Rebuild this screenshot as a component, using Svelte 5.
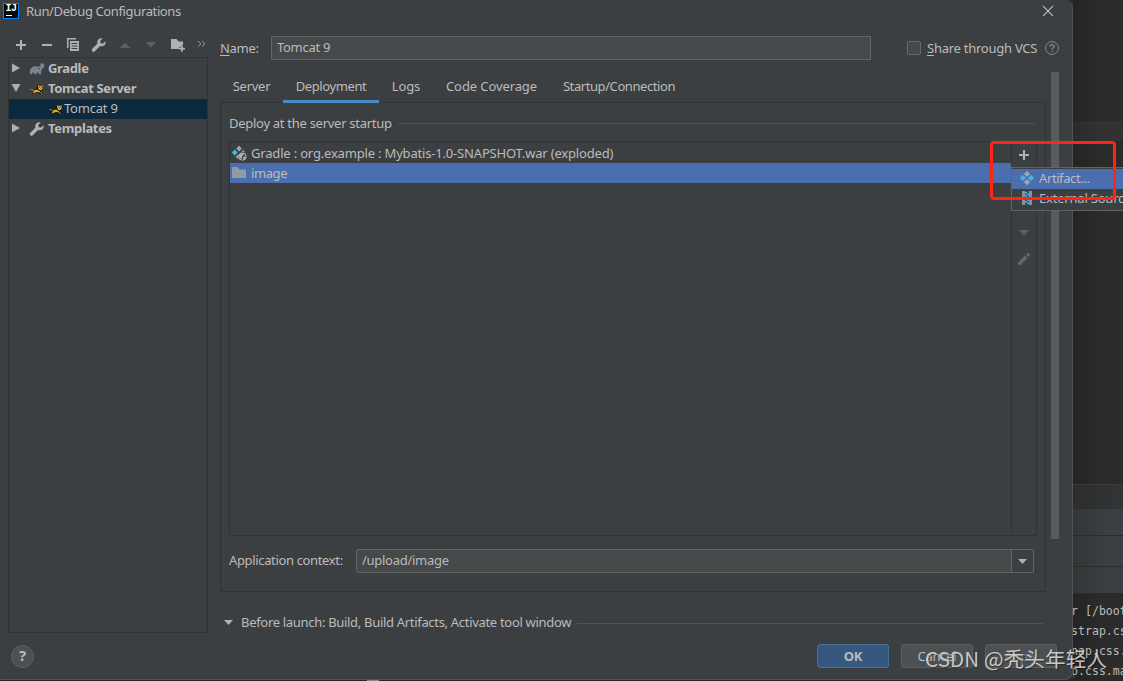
<script>
  let name = $state("Tomcat 9");
  let context = $state("/upload/image");
  let activeTab = $state("Deployment");
  let selected = $state(1);

  const tabs = [
    { label: "Server", cls: "server" },
    { label: "Deployment", cls: "deployment" },
    { label: "Logs", cls: "logs" },
    { label: "Code Coverage", cls: "coverage" },
    { label: "Startup/Connection", cls: "startup" },
  ];

  const tree = [
    { label: "Gradle", icon: "gradle", arrow: "right" },
    { label: "Tomcat Server", icon: "tomcat", arrow: "down" },
    { label: "Tomcat 9", icon: "tomcat", child: true },
    { label: "Templates", icon: "wrench", arrow: "right" },
  ];

  const deployments = [
    { label: "Gradle : org.example : Mybatis-1.0-SNAPSHOT.war (exploded)", icon: "exploded" },
    { label: "image", icon: "folder" },
  ];

  const consoleLines = ["r [/boot", "strap.cs", "nap.css.", "p.css.ma"];
</script>

{#snippet icon(kind)}
  <svg class="icon" width="16" height="16" viewBox="0 0 16 16">
    {#if kind === "add"}
      <path fill="#afb1b3" d="M7 3h2v4h4v2H9v4H7V9H3V7h4z" />
    {:else if kind === "remove"}
      <path fill="#afb1b3" d="M3 7h10v2H3z" />
    {:else if kind === "copy"}
      <path fill="#afb1b3" fill-rule="evenodd" d="M2 1h9v1.500H3.500V11H2zM5 4h9v10H5zM6.500 6v1h6V6zm0 2.500v1h6v-1zm0 2.500v1h6v-1z" />
    {:else if kind === "wrench"}
      <path fill="#afb1b3" d="M14.500 4.300 12 6.600l-2.300-.4-.5-2.300L11.600 1.400C9.800.9 7.900 1.500 6.900 3c-.7 1.100-.8 2.400-.4 3.500L1.300 11.800a1.700 1.700 0 0 0 0 2.400 1.700 1.700 0 0 0 2.500.1L9.100 9c1.500.6 3.300.3 4.500-.9 1-1 1.300-2.500.9-3.800z" />
    {:else if kind === "up"}
      <path fill="#5c5e60" d="M2.500 11h11L8 5.500z" />
    {:else if kind === "down"}
      <path fill="#5c5e60" d="M2.500 5h11L8 10.500z" />
    {:else if kind === "newfolder"}
      <path fill="#afb1b3" d="M1 2h5.500l2 2.500H13V8h-2v2H9v2H1z" />
      <path fill="#afb1b3" d="M11 8.500h1.800v2.200H15v1.800h-2.200v2.200H11v-2.200H8.800v-1.800H11z" />
    {:else if kind === "folder"}
      <path fill="#919ba5" d="M1 2h5.500l2 2.500H15V13H1z" />
    {:else if kind === "gradle"}
      <path fill="#78868f" d="M.8 13.200C.5 9 1.800 6.400 4.500 5.500c2-.7 4 .5 6-.2 1-.4 1.700-1 2-1.500-.6-.1-.8.4-1.300.2-.5-.4.2-1.500 1.400-1.700 1.700-.3 2.800.9 2.700 2.500-.2 2-1.700 2.700-2.500 3.400-.7.700-.7 2-.8 5H9.900c-.1-1.300-.6-1.700-1.200-1.700-.8 0-1 .6-1.100 1.700H5.500c-.1-1.200-.5-1.700-1.200-1.700s-1.100.5-1.200 1.700z" />
      <circle cx="10.300" cy="7.500" r=".7" fill="#3c3f41" />
    {:else if kind === "tomcat"}
      <path fill="#17120a" d="M3 13 5 10.500 3.500 9.500 7.500 8 8.500 4H14l-.4 5-1.700 1.500 1.800 2.500h-3L8 11.500 5 13z" />
      <path fill="#e0a92e" d="m8.800 4.200 1.700.6h1.700l1.600-.6-.4 3.800-1.900 1.300-2-1.300zM4 9.700 8 8.600l3.200 1.600-.5 1.100-3-.4-3.300 1.500-.6-.7 1.400-1z" />
      <path fill="none" stroke="#c79628" stroke-width=".9" d="M1.500 8.500c1.500-.4 2.300.4 3.300 1.200M10 10.700l3 2" />
      <path fill="#f4e6bf" d="M10.300 6.900h2.400v1l-1.200.8-1.200-.8z" />
      <path fill="#17120a" d="M10 5.700h.8v.8H10zM12 5.700h.8v.8H12zM11.100 7.300h.8v.7h-.8z" />
    {:else if kind === "artifact"}
      <path fill="#9aa7b0" d="m8 .8 3.100 3.100L8 7 4.900 3.900zM8 9l3.100 3.100L8 15.200l-3.100-3.100z" />
      <path fill="#40b6e0" d="M3.900 4.900 7 8l-3.100 3.100L.8 8zM12.100 4.900 15.200 8l-3.100 3.100L9 8z" />
    {:else if kind === "exploded"}
      <path fill="#9aa7b0" d="m8 .8 2.800 2.800L8 6.400 5.200 3.600zM7.500 9v5.500L4.600 11.700z" />
      <path fill="#40b6e0" d="M3.700 4.600 6.700 7.600l-3 3-3-3zM12.200 4.800l2 2-2-.1-2.200.3z" />
      <circle cx="11.500" cy="11.500" r="3.700" fill="#46494b" stroke="#afb8bf" />
      <path fill="#afb8bf" d="M8.200 10.300 11 8l2 .8-1 1.600-1.500.3.600 1.500-1 1.700-1.900-1.600zM12.300 12l2.500-.5-.8 2.200-1.700.9z" />
    {:else if kind === "external"}
      <path fill="#87939a" d="M3 1h3v14H3zM10 1h3v14h-3z" />
      <path fill="#24566b" d="M6 1h4v14H6z" />
      <path fill="#40b6e0" d="M6 2h2v1.500H6zM8 3.500h2V5H8zM6 5h2v1.500H6zM8 6.500h2V8H8zM6 8h2v1.500H6zM8 9.500h2V11H8zM6 11h2v1.500H6zM8 12.500h2V14H8z" />
    {:else if kind === "edit"}
      <path fill="#66696b" d="m2 11.500 7-7L11.500 7l-7 7H2zM10 3.500l1.300-1.300c.4-.4 1-.4 1.400 0l1.100 1.100c.4.4.4 1 0 1.400L12.500 6z" />
    {/if}
  </svg>
{/snippet}

<div class="screen">
  <div class="window">
    <div class="dialog">
      <header class="titlebar">
        <span class="logo">IJ</span>
        <h1>Run/Debug Configurations</h1>
        <svg class="close" width="12" height="12" viewBox="0 0 12 12">
          <path d="M1 1l10 10M11 1 1 11" stroke="#b4b6b8" stroke-width="1.100" />
        </svg>
      </header>

      <div class="body">
        <aside>
          <div class="toolbar">
            {#each ["add", "remove", "copy", "wrench", "up", "down", "newfolder"] as kind}
              {@render icon(kind)}
            {/each}
            <svg class="more" width="9" height="8" viewBox="0 0 9 8">
              <path d="m1 1 3 2.700L1 6.500M5 1l3 2.700-3 2.800" fill="none" stroke="#9a9da0" />
            </svg>
          </div>
          <div class="tree">
            {#each tree as node}
              <div class="node" class:child={node.child}>
                {#if node.arrow}
                  <svg class="arrow" width="10" height="10" viewBox="0 0 10 10">
                    <path fill="#adadad" d={node.arrow === "right" ? "M1 .5v9L9 5z" : "M.5 1h9L5 9z"} />
                  </svg>
                {/if}
                {@render icon(node.icon)}
                <span>{node.label}</span>
              </div>
            {/each}
          </div>
        </aside>

        <section class="config">
          <div class="name-row">
            <label class="name-label" for="name"><u>N</u>ame:</label>
            <input id="name" bind:value={name} />
            <span class="checkbox"></span>
            <span class="share"><u>S</u>hare through VCS</span>
            <svg class="hint" width="14" height="14" viewBox="0 0 14 14">
              <circle cx="7" cy="7" r="6.400" fill="none" stroke="#7f8b91" />
              <path d="M5 5.600c0-2.700 4.100-2.600 4.100-.2 0 1.400-2 1.500-2 3.100" fill="none" stroke="#7f8b91" stroke-width="1.300" />
              <path d="M6.400 9.700h1.400v1.300H6.400z" fill="#7f8b91" />
            </svg>
          </div>

          <div class="scroll-area">
            <div class="settings">
              <nav>
                {#each tabs as tab}
                  <button
                    class="tab {tab.cls}"
                    class:active={tab.label === activeTab}
                    onclick={() => (activeTab = tab.label)}>{tab.label}</button>
                {/each}
              </nav>

              <div class="panel">
                <div class="group-title"><span>Deploy at the server startup</span></div>
                <div class="deploy">
                  <div class="list">
                    {#each deployments as item, i}
                      <button class="row" class:selected={i === selected} onclick={() => (selected = i)}>
                        {@render icon(item.icon)}
                        <span class={item.icon}>{item.label}</span>
                      </button>
                    {/each}
                  </div>
                  <div class="actions">
                    {@render icon("add")}
                    {@render icon("remove")}
                    {@render icon("up")}
                    {@render icon("down")}
                    {@render icon("edit")}
                  </div>
                </div>
                <div class="context-row">
                  <label for="context">Application context:</label>
                  <div class="combo">
                    <input id="context" bind:value={context} />
                    <span class="drop">
                      <svg width="9" height="5" viewBox="0 0 9 5"><path fill="#adb0b2" d="M0 0h9L4.500 5z" /></svg>
                    </span>
                  </div>
                </div>
              </div>
            </div>
            <div class="scrollbar"></div>
          </div>

          <div class="before">
            <svg width="9" height="5" viewBox="0 0 9 5"><path fill="#afb1b3" d="M0 0h9L4.500 5z" /></svg>
            <span>Before launch: Build, Build Artifacts, Activate tool window</span>
          </div>
        </section>
      </div>

      <footer>
        <button class="help">?</button>
        <button class="btn ok">OK</button>
        <button class="btn">Cancel</button>
        <button class="btn apply">Apply</button>
      </footer>
    </div>

    <div class="ide">
      <div class="editor"></div>
      <div class="line-band"></div>
      <div class="editor-rest"></div>
      <div class="tool-head"></div>
      <div class="tool-row first"></div>
      <div class="tool-row second"></div>
      <div class="tool-row third"></div>
      <div class="console">
        {#each consoleLines as line}
          <div>{line}</div>
        {/each}
      </div>
    </div>
  </div>
  <div class="edge"><span></span></div>

  <div class="popup">
    <div class="item current">{@render icon("artifact")}<span>Artifact...</span></div>
    <div class="item">{@render icon("external")}<span>External Source...</span></div>
  </div>
  <div class="marker"></div>
  <div class="watermark">CSDN @秃头年轻人</div>
</div>

<style>
  :global(body) {
    margin: 0;
    overflow: hidden;
    background: #2b2b2b;
  }

  .screen {
    position: relative;
    width: 1123px;
    height: 681px;
    overflow: hidden;
    font: 13px/20px "Noto Sans", "Open Sans", sans-serif;
    letter-spacing: -0.28px;
    color: #bbbbbb;
    white-space: nowrap;
  }
  .screen * {
    box-sizing: border-box;
  }
  button,
  input {
    font: inherit;
    color: inherit;
    letter-spacing: inherit;
    margin: 0;
    padding: 0;
    border: 0;
    background: none;
    outline: 0;
  }
  svg {
    display: block;
    flex: none;
  }
  u {
    text-decoration-thickness: 1px;
    text-underline-offset: 2px;
  }

  .window {
    display: flex;
    height: 680px;
  }
  .dialog {
    flex: none;
    display: flex;
    flex-direction: column;
    width: 1073px;
    background: #3c3f41;
    border-right: 1px solid #505254;
    border-bottom: 1px solid #505254;
    border-radius: 0 8px 8px 0;
  }

  .titlebar {
    display: flex;
    align-items: center;
    height: 24px;
    padding: 0 18px 2px 3px;
  }
  .logo {
    width: 16px;
    height: 16px;
    border: 1px solid #087cfa;
    background: #080808;
    color: #fff;
    font: bold 10px/10px "Liberation Mono", monospace;
    letter-spacing: -0.5px;
    text-align: center;
  }
  .logo::after {
    content: "";
    display: block;
    width: 6px;
    height: 1px;
    margin: 1px 0 0 2px;
    background: #fff;
  }
  h1 {
    flex: 1;
    margin: 0 0 0 7px;
    font-size: 13px;
    font-weight: 400;
    letter-spacing: -0.37px;
  }

  .body {
    display: flex;
    height: 609px;
  }
  aside {
    width: 200px;
    margin-left: 8px;
  }
  .toolbar {
    display: flex;
    align-items: center;
    gap: 10px;
    height: 33px;
    padding: 9px 0 0 5px;
  }
  .toolbar .more {
    margin: 0 0 2px 2px;
  }
  .toolbar .icon:nth-child(7) {
    margin: 0 -1px 0 1px;
  }
  .tree {
    height: 576px;
    padding-top: 1px;
    border: 1px solid #323232;
  }
  .node {
    display: flex;
    align-items: center;
    gap: 3px;
    height: 20px;
    padding-left: 2px;
    font-weight: 700;
    letter-spacing: -0.34px;
  }
  .node span {
    padding-bottom: 2px;
  }
  .node .arrow {
    margin: 0 5px 2px 0;
  }
  .node.child {
    padding-left: 39px;
    background: #0d293e;
    font-weight: 400;
    letter-spacing: -0.2px;
    gap: 0;
  }

  .config {
    width: 839px;
    margin-left: 12px;
  }
  .name-row {
    display: flex;
    align-items: center;
    height: 48px;
  }
  .name-label {
    width: 51px;
    padding-bottom: 1px;
  }
  .name-row input {
    width: 600px;
    height: 24px;
    padding: 0 5px 2px;
    border: 1px solid #646464;
    background: #45494a;
  }
  .checkbox {
    width: 14px;
    height: 14px;
    margin: 0 6px 0 36px;
    border: 1px solid #6b6b6b;
    border-radius: 2px;
    background: #43494a;
  }
  .share {
    width: 112px;
    letter-spacing: -0.25px;
  }
  .hint {
    margin-left: 6px;
  }

  .scroll-area {
    display: flex;
    height: 520px;
  }
  .settings {
    width: 826px;
  }
  nav {
    display: flex;
    height: 31px;
  }
  .tab {
    height: 31px;
    padding-bottom: 4px;
  }
  .server {
    width: 63px;
    letter-spacing: -0.25px;
  }
  .deployment {
    width: 96px;
    letter-spacing: -0.4px;
  }
  .logs {
    width: 54px;
    letter-spacing: -0.1px;
  }
  .coverage {
    width: 117px;
    letter-spacing: -0.1px;
  }
  .startup {
    width: 138px;
    letter-spacing: -0.42px;
  }
  .tab.active {
    box-shadow: inset 0 -3px #4a88c7;
  }
  .panel {
    height: 490px;
    margin-top: -1px;
    padding: 0 8px;
    border: 1px solid #323232;
    border-top: 0;
    background: linear-gradient(#323232, #323232) 0 0 / 62px 1px no-repeat,
      linear-gradient(#323232, #323232) 158px 0 / 700px 1px no-repeat;
  }
  .group-title,
  .before {
    display: flex;
    align-items: center;
  }
  .group-title {
    height: 39px;
    padding: 4px 2px 0 0;
  }
  .group-title span {
    padding-bottom: 1px;
  }
  .group-title::after,
  .before::after {
    content: "";
    flex: 1;
    height: 1px;
    margin-left: 6px;
    background: #515456;
  }
  .deploy {
    display: flex;
    height: 395px;
    border: 1px solid #323232;
  }
  .list {
    flex: 1;
    padding-top: 1px;
  }
  .row {
    display: flex;
    align-items: center;
    gap: 4px;
    width: 100%;
    height: 20px;
    padding-left: 1px;
  }
  .row .exploded {
    letter-spacing: -0.18px;
  }
  .row .folder {
    letter-spacing: -0.4px;
  }
  .row.selected {
    background: #4b6eaf;
  }
  .actions {
    display: flex;
    flex-direction: column;
    gap: 10px;
    width: 25px;
    padding: 5px 4px;
    border-left: 1px solid #323232;
  }
  .context-row {
    display: flex;
    align-items: center;
    height: 50px;
  }
  .context-row label {
    width: 127px;
    padding-bottom: 2px;
    letter-spacing: -0.35px;
  }
  .combo {
    display: flex;
    width: 678px;
    height: 24px;
    border: 1px solid #646464;
    border-radius: 2px;
  }
  .combo input {
    flex: 1;
    padding: 0 5px 2px;
    background: #45494a;
  }
  .drop {
    display: grid;
    place-items: center;
    width: 22px;
    border-left: 1px solid #646464;
  }
  .scrollbar {
    width: 8px;
    height: 467px;
    margin-left: 5px;
    background: #595b5d;
  }
  .before {
    height: 20px;
    margin-top: 21px;
    padding: 0 16px 0 4px;
  }
  .before svg {
    margin-bottom: 2px;
  }
  .before span {
    margin-left: 8px;
    padding-bottom: 2px;
    letter-spacing: -0.31px;
  }

  footer {
    display: flex;
    gap: 12px;
    padding: 11px 15px 0 11px;
  }
  .help {
    width: 23px;
    height: 23px;
    margin: 1px auto 0 0;
    padding-bottom: 2px;
    border: 1px solid #5e6162;
    border-radius: 50%;
    background: #4c5052;
    font: bold 15px/19px "Noto Sans", sans-serif;
  }
  .btn {
    width: 72px;
    height: 24px;
    border: 1px solid #5e6060;
    border-radius: 3px;
    background: #4c5052;
    line-height: 20px;
  }
  .btn.ok {
    border-color: #4c708c;
    background: #365880;
    font-weight: 700;
  }
  .btn.apply {
    color: #777;
  }

  .ide {
    flex: 1;
    display: flex;
    flex-direction: column;
    overflow: hidden;
    background: linear-gradient(90deg, rgba(0, 0, 0, 0.18), transparent 30px), #2b2b2b;
  }
  .ide > div {
    flex: none;
  }
  .editor {
    height: 121px;
  }
  .line-band {
    height: 20px;
    background: rgba(255, 255, 255, 0.035);
  }
  .editor-rest {
    height: 343px;
  }
  .tool-head {
    height: 25px;
    border-top: 1px solid #3c3c3c;
    background: linear-gradient(90deg, #2c2d2e, #323335 45px);
  }
  .tool-row {
    background: linear-gradient(90deg, #333637, #3c3f41 35px);
    border-bottom: 1px solid #2b2b2b;
  }
  .first {
    height: 27px;
  }
  .second {
    height: 31px;
  }
  .third {
    height: 27px;
  }
  .console {
    padding-top: 7px;
    margin-left: -2px;
    font: 11.5px/20px "DejaVu Sans Mono", monospace;
    letter-spacing: 0.05px;
  }

  .edge {
    height: 1px;
    background: #2c2426;
  }
  .edge span {
    display: block;
    width: 12px;
    height: 1px;
    margin-left: 367px;
    background: #8b8789;
  }

  .popup {
    position: absolute;
    left: 1011px;
    top: 167px;
    width: 160px;
    height: 44px;
    padding: 1px 0;
    border: 1px solid #616365;
    background: #3c3f41;
  }
  .item {
    display: flex;
    align-items: center;
    gap: 4px;
    height: 20px;
    padding-left: 7px;
    letter-spacing: -0.4px;
  }
  .item span {
    padding-bottom: 2px;
  }
  .item:last-child {
    letter-spacing: -0.2px;
  }
  .item .icon {
    margin-bottom: 2px;
  }
  .item.current {
    background: #4b6eaf;
  }
  .marker {
    position: absolute;
    left: 990px;
    top: 141px;
    width: 126px;
    height: 59px;
    border: 3px solid #ff2415;
    border-radius: 4px;
  }
  .watermark {
    position: absolute;
    left: 925px;
    top: 643px;
    font: 20.6px/30px "Noto Sans CJK SC", sans-serif;
    letter-spacing: 0.1px;
    color: rgba(225, 225, 225, 0.85);
    text-shadow: 1px 1px 1px rgba(0, 0, 0, 0.4);
  }
</style>
